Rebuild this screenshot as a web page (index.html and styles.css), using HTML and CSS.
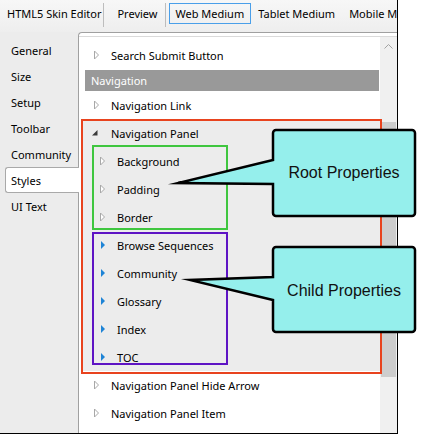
FILE: index.html
```html
<!DOCTYPE html>
<html lang="en">
<head>
<meta charset="utf-8">
<title>HTML5 Skin Editor</title>
<link rel="stylesheet" href="styles.css">
</head>
<body>
<div class="window">
  <div class="toolbar">
    <span class="tb-item tb-title">HTML5 Skin Editor</span>
    <span class="sep sep1"></span>
    <span class="tb-item tb-preview">Preview</span>
    <span class="sep sep2"></span>
    <span class="tb-item tb-tab active">Web Medium</span>
    <span class="tb-item tb-tab">Tablet Medium</span>
    <span class="tb-item tb-tab">Mobile Medium</span>
  </div>
  <div class="main">
    <ul class="nav">
      <li>General</li>
      <li>Size</li>
      <li>Setup</li>
      <li>Toolbar</li>
      <li>Community</li>
      <li class="sel">Styles</li>
      <li>UI Text</li>
    </ul>
    <div class="panel">
      <div class="list">
        <div class="tree">
          <div class="row"><svg class="tog" viewBox="0 0 22 28"><polygon class="tri-hollow" points="5.5,10 9.5,14 5.5,18"/></svg><span>Search Submit Button</span></div>
          <div class="head">Navigation</div>
          <div class="row"><svg class="tog" viewBox="0 0 22 28"><polygon class="tri-hollow" points="5.5,10 9.5,14 5.5,18"/></svg><span>Navigation Link</span></div>
          <div class="group">
            <div class="row"><svg class="tog" viewBox="0 0 22 28"><polygon class="tri-open" points="8.5,11 8.5,16.5 3,16.5"/></svg><span>Navigation Panel</span></div>
            <div class="row l1"><svg class="tog" viewBox="0 0 22 28"><polygon class="tri-hollow" points="5.5,10 9.5,14 5.5,18"/></svg><span>Background</span></div>
            <div class="row l1"><svg class="tog" viewBox="0 0 22 28"><polygon class="tri-hollow" points="5.5,10 9.5,14 5.5,18"/></svg><span>Padding</span></div>
            <div class="row l1"><svg class="tog" viewBox="0 0 22 28"><polygon class="tri-hollow" points="5.5,10 9.5,14 5.5,18"/></svg><span>Border</span></div>
            <div class="row l1"><svg class="tog" viewBox="0 0 22 28"><polygon class="tri-blue" points="6,10 10,14 6,18"/></svg><span>Browse Sequences</span></div>
            <div class="row l1"><svg class="tog" viewBox="0 0 22 28"><polygon class="tri-blue" points="6,10 10,14 6,18"/></svg><span>Community</span></div>
            <div class="row l1"><svg class="tog" viewBox="0 0 22 28"><polygon class="tri-blue" points="6,10 10,14 6,18"/></svg><span>Glossary</span></div>
            <div class="row l1"><svg class="tog" viewBox="0 0 22 28"><polygon class="tri-blue" points="6,10 10,14 6,18"/></svg><span>Index</span></div>
            <div class="row l1"><svg class="tog" viewBox="0 0 22 28"><polygon class="tri-blue" points="6,10 10,14 6,18"/></svg><span>TOC</span></div>
          </div>
          <div class="row"><svg class="tog" viewBox="0 0 22 28"><polygon class="tri-hollow" points="5.5,10 9.5,14 5.5,18"/></svg><span>Navigation Panel Hide Arrow</span></div>
          <div class="row"><svg class="tog" viewBox="0 0 22 28"><polygon class="tri-hollow" points="5.5,10 9.5,14 5.5,18"/></svg><span>Navigation Panel Item</span></div>
        </div>
        <div class="scrollbar">
          <svg class="sb-arrow" viewBox="0 0 17 17"><polyline points="4.5,11.5 8.5,7.5 12.5,11.5"/></svg>
          <div class="thumb"></div>
        </div>
      </div>
    </div>
  </div>

  <div class="anno anno-red"></div>
  <div class="anno anno-green"></div>
  <div class="anno anno-purple"></div>

  <svg class="callouts" viewBox="0 0 424 435">
    <path d="M276,130 H412 A3,3 0 0 1 415,133 V213 A3,3 0 0 1 412,216 H276 A3,3 0 0 1 273,213 V184 L178,183 L273,160 V133 A3,3 0 0 1 276,130 Z"/>
    <path d="M276,247 H412 A3,3 0 0 1 415,250 V329 A3,3 0 0 1 412,332 H276 A3,3 0 0 1 273,329 V300 L190,280 L273,277 V250 A3,3 0 0 1 276,247 Z"/>
  </svg>
  <div class="callout-text callout-root">Root Properties</div>
  <div class="callout-text callout-child">Child Properties</div>
</div>
</body>
</html>
```
FILE: styles.css
```css
* { box-sizing: border-box; }

html, body { margin: 0; padding: 0; background: #fff; overflow: hidden; }

body {
  font-family: "Noto Sans", "Segoe UI", sans-serif;
  font-size: 11px;
  color: #000;
}

.window {
  position: relative;
  width: 398px;
  height: 434px;
  border-right: 1px solid #000;
  border-bottom: 1px solid #000;
  background: #ececec;
  display: flex;
  flex-direction: column;
}

/* toolbar */
.toolbar {
  flex: none;
  height: 32px;
  display: flex;
  align-items: flex-start;
  padding: 3px 0 0 6px;
  background: linear-gradient(#f7f7f7, #eeeeee);
  white-space: nowrap;
  overflow: hidden;
}
.tb-item {
  height: 21px;
  line-height: 20px;
  border: 1px solid transparent;
  flex: none;
}
.tb-title { padding: 0; }
.tb-preview { padding: 0; }
.tb-tab { padding: 0 6px; }
.tb-tab.active { border-color: #4a9fe9; }
.sep {
  flex: none;
  width: 1px;
  height: 24px;
  background: #bdbdbd;
}
.sep1 { margin: 0 12px 0 1px; }
.sep2 { margin: 0 3px 0 6px; }

/* main area */
.main {
  flex: 1;
  display: flex;
  min-height: 0;
}

.nav {
  flex: none;
  width: 78px;
  margin: 0;
  padding: 6px 0 0 0;
  list-style: none;
}
.nav li {
  height: 26px;
  line-height: 26px;
  padding-left: 11px;
  white-space: nowrap;
}
.nav li.sel {
  position: relative;
  z-index: 1;
  margin: -1px -1px 1px 5px;
  padding-left: 5px;
  background: #fff;
  border: 1px solid #a9a9a9;
  border-right: none;
  border-radius: 3px 0 0 3px;
  line-height: 26px;
}

.panel {
  flex: 1;
  min-width: 0;
  background: #fff;
  border-top: 1px solid #a0a0a0;
  border-left: 1px solid #a0a0a0;
  border-top-left-radius: 4px;
  padding-top: 3px;
  display: flex;
  flex-direction: column;
}

.list {
  flex: 1;
  min-height: 0;
  display: flex;
  border-top: 1px solid #dadada;
  overflow: hidden;
}

.tree {
  flex: 1;
  min-width: 0;
  padding-top: 4px;
}

.row {
  height: 28px;
  display: flex;
  align-items: center;
  padding-left: 10px;
  white-space: nowrap;
}
.row.l1 { padding-left: 16px; }

.tog {
  flex: none;
  width: 22px;
  height: 28px;
}
.tri-hollow { fill: #fff; stroke: #a8a8a8; stroke-width: 1; }
.tri-open { fill: #3a3a3a; }
.tri-blue { fill: #1e84d6; }

.head {
  height: 21px;
  margin: 1px 1px 0 6px;
  padding-left: 6px;
  line-height: 21px;
  background: #999999;
  color: #fff;
}

.group {
  margin-left: 3px;
  background: #ececec;
}
.group .row { padding-left: 7px; }
.group .row.l1 { padding-left: 13px; }

.scrollbar {
  flex: none;
  width: 17px;
  background: #f0f0f0;
}
.sb-arrow {
  display: block;
  width: 17px;
  height: 17px;
  fill: none;
  stroke: #a3a3a3;
  stroke-width: 1;
}
.thumb {
  margin: 68px 1px 0 1px;
  height: 255px;
  background: #cdcdcd;
}

/* annotations */
.anno {
  position: absolute;
  border: 2px solid;
  pointer-events: none;
}
.anno-red { left: 81px; top: 119px; width: 301px; height: 255px; border-color: #e8431e; }
.anno-green { left: 92px; top: 145px; width: 136px; height: 85px; border-color: #3fc63f; }
.anno-purple { left: 92px; top: 232px; width: 136px; height: 133px; border-color: #5e14c4; }

.callouts {
  position: absolute;
  left: 0;
  top: 0;
  width: 424px;
  height: 435px;
  pointer-events: none;
}
.callouts path {
  fill: #95efec;
  stroke: #000;
  stroke-width: 2.5;
  stroke-linejoin: miter;
  stroke-miterlimit: 10;
}

.callout-text {
  position: absolute;
  left: 273px;
  width: 142px;
  height: 20px;
  line-height: 20px;
  text-align: center;
  font-family: "Liberation Sans", Arial, sans-serif;
  font-size: 16px;
  color: #111;
  white-space: nowrap;
}
.callout-root { top: 163px; }
.callout-child { top: 281px; }
```
